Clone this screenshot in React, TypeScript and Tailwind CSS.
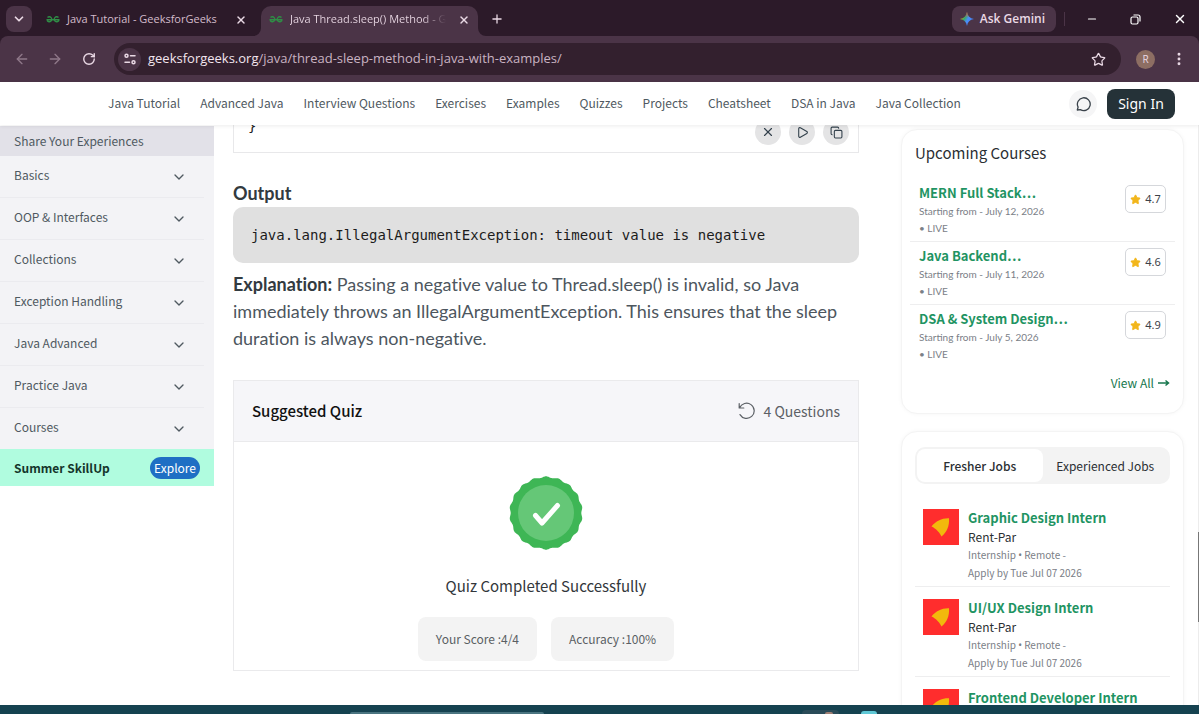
import type { ReactNode } from "react";
import {
  ArrowLeft,
  ArrowRight,
  ChevronDown,
  Copy,
  EllipsisVertical,
  Minus,
  Play,
  Plus,
  RotateCw,
  Star,
  X,
} from "lucide-react";

// ── Data ────────────────────────────────────────────────────────────
const NAV_LINKS = [
  "Java Tutorial",
  "Advanced Java",
  "Interview Questions",
  "Exercises",
  "Examples",
  "Quizzes",
  "Projects",
  "Cheatsheet",
  "DSA in Java",
  "Java Collection",
];

const SECTIONS = [
  "Basics",
  "OOP & Interfaces",
  "Collections",
  "Exception Handling",
  "Java Advanced",
  "Practice Java",
  "Courses",
];

const COURSES = [
  { title: "MERN Full Stack…", date: "July 12, 2026", rating: "4.7" },
  { title: "Java Backend…", date: "July 11, 2026", rating: "4.6" },
  { title: "DSA & System Design…", date: "July 5, 2026", rating: "4.9" },
];

const JOBS = ["Graphic Design Intern", "UI/UX Design Intern", "Frontend Developer Intern"];

// ── Drawings ────────────────────────────────────────────────────────
function GfgMark() {
  return (
    <svg viewBox="0 0 28 14" className="h-[7px] w-[14px] shrink-0" fill="none" stroke="#2f8d46" strokeWidth="2.6">
      <path d="M3 3A5 5 0 1 1 2.500 9.500M1 7.500H27M25 3A5 5 0 1 0 25.500 9.500V7.500M2.500 9.500V7.500" />
    </svg>
  );
}

function GeminiMark() {
  return (
    <svg viewBox="0 0 24 24" className="size-[14px]">
      <defs>
        <linearGradient id="gemini" x1="0" y1="0.2" x2="1" y2="0.8">
          <stop offset="0.1" stopColor="#f2b90c" />
          <stop offset="0.35" stopColor="#34a86a" />
          <stop offset="0.55" stopColor="#4b8df8" />
          <stop offset="1" stopColor="#3f7df6" />
        </linearGradient>
        <linearGradient id="gemini-top" x1="0" y1="0" x2="0" y2="1">
          <stop offset="0" stopColor="#ee4d5d" />
          <stop offset="0.4" stopColor="#ee4d5d" stopOpacity="0" />
        </linearGradient>
      </defs>
      <path d="M12 0C13 7 17 11 24 12 17 13 13 17 12 24 11 17 7 13 0 12 7 11 11 7 12 0Z" fill="url(#gemini)" />
      <path d="M12 0C13 7 17 11 24 12 17 13 13 17 12 24 11 17 7 13 0 12 7 11 11 7 12 0Z" fill="url(#gemini-top)" />
    </svg>
  );
}

function SiteSettingsIcon() {
  return (
    <svg viewBox="0 0 14 12" className="h-3 w-3.5" fill="none" stroke="currentColor" strokeWidth="1.5" strokeLinecap="round">
      <circle cx="3.5" cy="2.8" r="1.5" />
      <path d="M7.5 2.8H12M2 9.2H6.5" />
      <circle cx="10.5" cy="9.2" r="1.5" />
    </svg>
  );
}

function ChatIcon() {
  return (
    <svg viewBox="0 0 16 16" className="size-4" fill="none" stroke="currentColor" strokeWidth="1.3" strokeLinejoin="round">
      <path d="M2.3 14l.8-2.9A6.4 6.4 0 1 1 5.4 13.6Z" />
    </svg>
  );
}

function RetryIcon() {
  return (
    <svg viewBox="0 0 18 18" className="size-[18px]" fill="none" stroke="currentColor" strokeWidth="1.2" strokeLinecap="round" strokeLinejoin="round">
      <path d="M1.2 1.6V6H5.8M1.6 5.8A7.6 7.6 0 1 1 2 12.6" />
    </svg>
  );
}

// wavy edge of the success badge
const SEAL_POINTS = Array.from({ length: 360 }, (_, i) => {
  const a = (i * Math.PI) / 180;
  const r = 36 + 0.7 * Math.cos(18 * a);
  return `${(37 + r * Math.sin(a)).toFixed(2)},${(37 - r * Math.cos(a)).toFixed(2)}`;
}).join(" ");

function SuccessSeal() {
  return (
    <svg viewBox="0 0 74 74" className="size-[74px]">
      <polygon points={SEAL_POINTS} fill="#3eb655" />
      <circle cx="37" cy="37" r="28" fill="#65c777" />
      <path d="M26.5 39.5L33 47L48.5 29.5" fill="none" stroke="#fff" strokeWidth="5" strokeLinecap="round" strokeLinejoin="round" />
    </svg>
  );
}

function CompanyLogo() {
  return (
    <svg viewBox="0 0 36 36" className="mt-1 size-9 shrink-0">
      <rect width="36" height="36" fill="#ff2d2d" />
      <path d="M8.5 17.5C13 12 19 9 26 9.3 26.500 17 24 23 18.500 27.500 17 24 13 19.500 8.500 17.500Z" fill="#f2b90c" />
    </svg>
  );
}

// ── Browser chrome ──────────────────────────────────────────────────
function TabStrip() {
  return (
    <div className="flex h-9 shrink-0 items-start bg-[#2c1a29] pt-1.5 font-['Open_Sans',sans-serif] text-[#ead9e5]">
      <button aria-label="Search tabs" className="ml-1.5 flex size-[26px] items-center justify-center rounded-lg bg-[#4b3447]">
        <ChevronDown size={14} strokeWidth={3} />
      </button>
      <div className="ml-3.5 flex h-[27px] w-[215px] items-center">
        <GfgMark />
        <span className="ml-[7px] flex-1 whitespace-nowrap text-[11px] text-[#d3bccb]">Java Tutorial - GeeksforGeeks</span>
        <button aria-label="Close tab" className="mr-3.5">
          <X size={12} strokeWidth={2.8} />
        </button>
      </div>
      <div className="relative flex h-[30px] w-[217px] items-center rounded-t-[10px] bg-[#4b3447] pb-[3px] pl-2">
        <svg viewBox="0 0 8 8" className="absolute -left-2 bottom-0 size-2" fill="#4b3447">
          <path d="M8 0V8H0A8 8 0 0 0 8 0Z" />
        </svg>
        <svg viewBox="0 0 8 8" className="absolute -right-2 bottom-0 size-2" fill="#4b3447">
          <path d="M0 0V8H8A8 8 0 0 1 0 0Z" />
        </svg>
        <GfgMark />
        <span className="ml-[7px] w-[156px] overflow-hidden whitespace-nowrap bg-gradient-to-r from-[#ead9e5] from-85% to-transparent bg-clip-text text-[11px] text-transparent">
          Java Thread.sleep() Method - G
        </span>
        <button aria-label="Close tab" className="ml-auto mr-2">
          <X size={12} strokeWidth={2.8} />
        </button>
      </div>
      <button aria-label="New tab" className="ml-3 flex h-[26px] items-center">
        <Plus size={14} strokeWidth={2.2} />
      </button>
      <button className="ml-auto flex h-[26px] items-center gap-1.5 rounded-lg bg-[#4b3447] pl-2 pr-[11px] text-xs font-semibold">
        <GeminiMark />
        Ask Gemini
      </button>
      <span className="ml-2 mt-1.5 h-3.5 w-px bg-[#4b3447]" />
      <div className="ml-[21px] mr-3 flex h-[26px] items-center gap-8 text-white">
        <button aria-label="Minimize">
          <Minus size={12} strokeWidth={2.4} />
        </button>
        <button aria-label="Restore">
          <svg viewBox="0 0 11 11" className="size-[11px]" fill="none" stroke="currentColor" strokeWidth="1.2">
            <rect x="1" y="3" width="7" height="7" rx="1.5" />
            <path d="M3.5 1H8A2 2 0 0 1 10 3V7.5" />
          </svg>
        </button>
        <button aria-label="Close">
          <X size={14} strokeWidth={2.4} />
        </button>
      </div>
    </div>
  );
}

function Toolbar() {
  return (
    <div className="shrink-0 bg-[#2c1a29]">
      <div className="flex h-[46px] items-center rounded-t-lg bg-[#4b3447] pl-3.5 pr-3 font-['Open_Sans',sans-serif] text-[#ead9e5]">
        <button aria-label="Back" className="text-[#8f7889]">
          <ArrowLeft size={16} />
        </button>
        <button aria-label="Forward" className="ml-[17px] text-[#8f7889]">
          <ArrowRight size={16} />
        </button>
        <button aria-label="Reload" className="ml-[19px]">
          <RotateCw size={14} strokeWidth={2.4} />
        </button>
        <div className="ml-[18px] flex h-8 flex-1 items-center rounded-full bg-[#33202e] pl-1 pr-[15px]">
          <button aria-label="View site information" className="flex size-[23px] items-center justify-center rounded-full bg-[#4b3447]">
            <SiteSettingsIcon />
          </button>
          <p className="ml-[7px] flex-1 text-[13px] text-[#c9b3c2]">
            <span className="text-[#f3e6ef]">geeksforgeeks.org</span>/java/thread-sleep-method-in-java-with-examples/
          </p>
          <button aria-label="Bookmark this tab">
            <Star size={15} strokeWidth={2} />
          </button>
        </div>
        <button className="ml-[15px] size-[19px] rounded-full bg-[#8d6e63] text-[10px] leading-[19px]">R</button>
        <button aria-label="Menu" className="ml-4">
          <EllipsisVertical size={16} strokeWidth={2.4} />
        </button>
      </div>
    </div>
  );
}

// ── Site header ─────────────────────────────────────────────────────
function SiteHeader() {
  return (
    <header className="relative z-10 flex h-[43px] shrink-0 items-center bg-white pl-[108px] pr-6 shadow-[0_1px_4px_rgba(0,0,0,0.08)]">
      <nav className="flex flex-1 gap-5 whitespace-nowrap pb-0.5 text-xs text-[#4f5961]">
        {NAV_LINKS.map((link) => (
          <a key={link} href="#">
            {link}
          </a>
        ))}
      </nav>
      <button aria-label="Chat" className="flex size-7 items-center justify-center rounded-full bg-[#f5f5f6] text-[#39424a]">
        <ChatIcon />
      </button>
      <button className="ml-2.5 h-[30px] w-[68px] rounded-lg bg-[#253238] font-['Noto_Sans',sans-serif] text-sm text-white">Sign In</button>
    </header>
  );
}

// ── Left sidebar ────────────────────────────────────────────────────
function Sidebar() {
  return (
    <aside className="mt-px w-[214px] shrink-0 text-xs leading-5 text-[#4f5961]">
      <a href="#" className="flex h-[30px] items-center bg-[#e2e1e8] pl-3.5">
        Share Your Experiences
      </a>
      <div className="bg-[#f3f3f6] pr-2.5">
        {SECTIONS.map((name) => (
          <button
            key={name}
            className="flex h-[42px] w-full items-center justify-between border-b border-[#ebebef] pb-1 pl-3.5 pr-[17px] last:h-[41px] last:border-b-0"
          >
            {name}
            <ChevronDown size={16} strokeWidth={2} className="mt-1" />
          </button>
        ))}
      </div>
      <div className="flex h-[37px] items-center justify-between bg-[#b0fcdf] pl-3.5 pr-3.5">
        <span className="font-bold text-[#14352b]">Summer SkillUp</span>
        <button className="h-[22px] rounded-full bg-[#1f6fc4] px-1 leading-[22px] text-white">Explore</button>
      </div>
    </aside>
  );
}

// ── Article ─────────────────────────────────────────────────────────
function RoundButton({ label, children }: { label: string; children: ReactNode }) {
  return (
    <button aria-label={label} className="flex size-[26px] items-center justify-center rounded-full bg-[#e4e4e5] text-[#33414c]">
      {children}
    </button>
  );
}

function Article() {
  return (
    <main className="ml-[19px] mr-[42px] min-w-0 flex-1">
      <div className="-mt-2.5 flex h-[38px] items-start border border-[#e8e8ea] pl-3.5 pr-[9px] pt-[3px]">
        <code className="font-['DejaVu_Sans_Mono',monospace] text-sm leading-[14px] text-[#222]">{"}"}</code>
        <div className="ml-auto flex gap-2">
          <RoundButton label="Close">
            <X size={14} />
          </RoundButton>
          <RoundButton label="Run">
            <Play size={13} />
          </RoundButton>
          <RoundButton label="Copy">
            <Copy size={13} />
          </RoundButton>
        </div>
      </div>

      <h3 className="mt-[26px] font-['Lato',sans-serif] text-lg font-bold leading-7 text-[#323a40]">Output</h3>
      <pre className="rounded-[10px] bg-[#e0e0e0] px-[18px] py-[18px] font-['DejaVu_Sans_Mono',monospace] text-sm leading-5 text-[#1c1c1c]">
        java.lang.IllegalArgumentException: timeout value is negative
      </pre>
      <p className="mt-2 font-['Lato',sans-serif] text-lg leading-[27px] text-[#4d565e] [font-variant-ligatures:none]">
        <strong className="font-bold text-[#323a40]">Explanation:</strong> Passing a negative value to Thread.sleep() is invalid, so Java
        immediately throws an IllegalArgumentException. This ensures that the sleep duration is always non-negative.
      </p>

      <section className="mt-7 border border-[#eaeaec]">
        <div className="flex h-[61px] items-center justify-between border-b border-[#eaeaec] bg-[#f6f6f9] px-[18px]">
          <h2 className="text-[15px] font-medium text-[#111]">Suggested Quiz</h2>
          <span className="flex items-center gap-2 text-sm text-[#5c6166]">
            <RetryIcon />4 Questions
          </span>
        </div>
        <div className="flex flex-col items-center pb-[9px] pt-[34px]">
          <SuccessSeal />
          <p className="mt-6 text-[15px] leading-6 text-[#33373b]">Quiz Completed Successfully</p>
          <div className="mt-[19px] flex gap-3.5 text-xs text-[#5a5f63]">
            <span className="flex h-11 items-center rounded-lg bg-[#f3f3f3] px-[18px]">Your Score :4/4</span>
            <span className="flex h-11 items-center rounded-lg bg-[#f3f3f3] px-[18px]">Accuracy :100%</span>
          </div>
        </div>
      </section>
    </main>
  );
}

// ── Right rail ──────────────────────────────────────────────────────
function CoursesCard() {
  return (
    <section className="rounded-2xl border border-[#f4f4f4] bg-white px-2 pb-[18px] pt-[11px] shadow-[0_0_4px_rgba(0,0,0,0.04)]">
      <h2 className="pl-[5px] text-[15px] leading-6 text-[#2b2f33]">Upcoming Courses</h2>
      <div className="mt-3.5 divide-y divide-[#eeeeef]">
        {COURSES.map((course) => (
          <article key={course.title} className="flex h-[63px] items-start justify-between pl-[9px] pr-[9px] pt-1">
            <div>
              <a href="#" className="block text-[13px] font-bold leading-5 text-[#1f9463]">
                {course.title}
              </a>
              <p className="font-['Lato',sans-serif] text-[10px] leading-4 text-[#7b8087]">Starting from - {course.date}</p>
              <p className="font-['Lato',sans-serif] text-[10px] leading-[18px] text-[#7b8087]">• LIVE</p>
            </div>
            <span className="mt-0.5 flex h-7 w-[41px] items-center justify-center gap-1 rounded-[5px] border border-[#d5d7db] font-['Noto_Sans',sans-serif] text-[11px] text-[#3d4249]">
              <Star size={11} fill="#f2b61b" stroke="#f2b61b" />
              {course.rating}
            </span>
          </article>
        ))}
      </div>
      <a href="#" className="mt-[3px] flex items-center justify-end gap-1 pr-[5px] text-xs leading-6 text-[#17774d]">
        View All
        <svg viewBox="0 0 12 8" className="h-2 w-3" fill="none" stroke="currentColor" strokeWidth="1.5">
          <path d="M0 4H10M7.5 1.5L10.5 4L7.5 6.5" />
        </svg>
      </a>
    </section>
  );
}

function JobsCard() {
  return (
    <section className="mt-[17px] rounded-t-2xl border border-[#f4f4f4] bg-white px-[13px] pt-[15px] shadow-[0_0_4px_rgba(0,0,0,0.04)]">
      <div role="tablist" className="flex h-[37px] rounded-[10px] bg-[#f3f3f3] p-0.5 text-xs text-[#2b2f33]">
        <button role="tab" aria-selected="true" className="flex-1 rounded-lg bg-white font-medium">
          Fresher Jobs
        </button>
        <button role="tab" aria-selected="false" className="flex-1">
          Experienced Jobs
        </button>
      </div>
      <ul className="mt-[13px] divide-y divide-[#eeeeef]">
        {JOBS.map((title) => (
          <li key={title} className="flex h-[90px] gap-[9px] pl-2 pt-2">
            <CompanyLogo />
            <div className="whitespace-nowrap">
              <a href="#" className="block pt-[3px] text-[13px] font-bold leading-5 text-[#1f9463]">
                {title}
              </a>
              <p className="text-xs leading-[18px] text-[#2b2f33]">Rent-Par</p>
              <p className="text-[10px] leading-[17px] text-[#7b8087]">
                Internship <span className="font-['Noto_Sans',sans-serif]">•</span> Remote -
              </p>
              <p className="text-[10px] leading-[17px] text-[#7b8087]">Apply by Tue Jul 07 2026</p>
            </div>
          </li>
        ))}
      </ul>
    </section>
  );
}

export default function App() {
  return (
    <div className="flex h-screen flex-col overflow-hidden bg-white font-['Noto_Sans_CJK_SC',sans-serif]">
      <TabStrip />
      <Toolbar />
      <SiteHeader />
      <div className="flex min-h-0 flex-1 overflow-hidden">
        <Sidebar />
        <Article />
        <aside className="mr-3.5 w-[283px] shrink-0 pt-1">
          <CoursesCard />
          <JobsCard />
        </aside>
        {/* page scrollbar */}
        <div className="w-px shrink-0 bg-[#ececec] pt-[407px]">
          <div className="h-[90px] bg-[#777]" />
        </div>
      </div>
      {/* top edge of the taskbar */}
      <footer className="flex h-[9px] shrink-0 items-end bg-[#154250]">
        <div className="ml-[350px] h-0.5 w-[194px] rounded-t bg-[#4a7480]" />
        <div className="ml-[258px] flex h-1 w-[37px] items-end justify-end rounded-t bg-[#2a4b58] pr-1.5">
          <div className="h-0.5 w-2 rounded-t-full bg-[#a07f74]" />
        </div>
        <div className="ml-[22px] h-[3px] w-4 rounded-t-full bg-[#5fc8d6]" />
      </footer>
    </div>
  );
}
